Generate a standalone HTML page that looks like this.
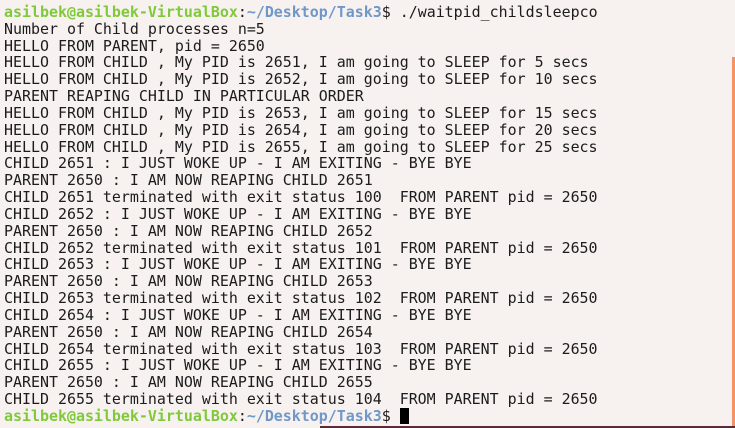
<!DOCTYPE html>
<html><head><meta charset="utf-8"><style>
html,body{margin:0;padding:0;width:735px;height:428px;overflow:hidden;}
body{background:#f7f1f0;position:relative;}
.t{position:absolute;left:4px;top:4px;font-family:"DejaVu Sans Mono","Liberation Mono",monospace;font-size:14.95px;color:#1c1c1c;}
.t div{height:16.83px;line-height:16.83px;white-space:pre;}
.g{color:#7fc93a;font-weight:bold;}
.b{color:#6f98c8;font-weight:bold;}
.cur{display:inline-block;width:9px;height:16px;background:#000;vertical-align:-3px;}
.sb{position:absolute;left:732px;top:57px;width:3px;height:369px;background:#f39466;}
.bl{position:absolute;left:320px;top:426px;width:415px;height:2px;background:#5a2a3a;}
</style></head><body>
<div class="t">
<div><span class="g">asilbek@asilbek-VirtualBox</span>:<span class="b">~/Desktop/Task3</span>$ ./waitpid_childsleepco</div>
<div>Number of Child processes n=5</div>
<div>HELLO FROM PARENT, pid = 2650</div>
<div>HELLO FROM CHILD , My PID is 2651, I am going to SLEEP for 5 secs</div>
<div>HELLO FROM CHILD , My PID is 2652, I am going to SLEEP for 10 secs</div>
<div>PARENT REAPING CHILD IN PARTICULAR ORDER</div>
<div>HELLO FROM CHILD , My PID is 2653, I am going to SLEEP for 15 secs</div>
<div>HELLO FROM CHILD , My PID is 2654, I am going to SLEEP for 20 secs</div>
<div>HELLO FROM CHILD , My PID is 2655, I am going to SLEEP for 25 secs</div>
<div>CHILD 2651 : I JUST WOKE UP - I AM EXITING - BYE BYE</div>
<div>PARENT 2650 : I AM NOW REAPING CHILD 2651</div>
<div>CHILD 2651 terminated with exit status 100  FROM PARENT pid = 2650</div>
<div>CHILD 2652 : I JUST WOKE UP - I AM EXITING - BYE BYE</div>
<div>PARENT 2650 : I AM NOW REAPING CHILD 2652</div>
<div>CHILD 2652 terminated with exit status 101  FROM PARENT pid = 2650</div>
<div>CHILD 2653 : I JUST WOKE UP - I AM EXITING - BYE BYE</div>
<div>PARENT 2650 : I AM NOW REAPING CHILD 2653</div>
<div>CHILD 2653 terminated with exit status 102  FROM PARENT pid = 2650</div>
<div>CHILD 2654 : I JUST WOKE UP - I AM EXITING - BYE BYE</div>
<div>PARENT 2650 : I AM NOW REAPING CHILD 2654</div>
<div>CHILD 2654 terminated with exit status 103  FROM PARENT pid = 2650</div>
<div>CHILD 2655 : I JUST WOKE UP - I AM EXITING - BYE BYE</div>
<div>PARENT 2650 : I AM NOW REAPING CHILD 2655</div>
<div>CHILD 2655 terminated with exit status 104  FROM PARENT pid = 2650</div>
<div><span class="g">asilbek@asilbek-VirtualBox</span>:<span class="b">~/Desktop/Task3</span>$ <span class="cur"></span></div>
</div>
<div class="sb"></div>
<div class="bl"></div>
</body></html>
